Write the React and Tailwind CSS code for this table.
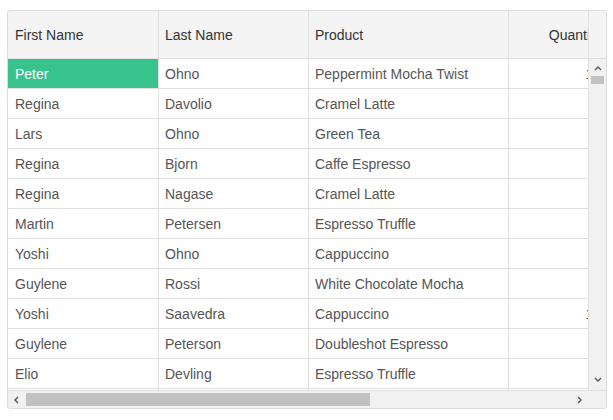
import React from 'react'

const rows = [
  ['Peter', 'Ohno', 'Peppermint Mocha Twist', '10'],
  ['Regina', 'Davolio', 'Cramel Latte', '5'],
  ['Lars', 'Ohno', 'Green Tea', '2'],
  ['Regina', 'Bjorn', 'Caffe Espresso', '4'],
  ['Regina', 'Nagase', 'Cramel Latte', '6'],
  ['Martin', 'Petersen', 'Espresso Truffle', '3'],
  ['Yoshi', 'Ohno', 'Cappuccino', '8'],
  ['Guylene', 'Rossi', 'White Chocolate Mocha', '7'],
  ['Yoshi', 'Saavedra', 'Cappuccino', '10'],
  ['Guylene', 'Peterson', 'Doubleshot Espresso', '9'],
  ['Elio', 'Devling', 'Espresso Truffle', '2'],
  ['Lars', 'Bjorn', 'Green Tea', '6'],
]

const Chevron = ({ dir }) => {
  const pts = {
    up: '1,5 4,2 7,5',
    down: '1,2 4,5 7,2',
    left: '5,1 2,4 5,7',
    right: '2,1 5,4 2,7',
  }[dir]
  return (
    <svg width="8" height="8" viewBox="0 0 8 8" className="block">
      <polyline points={pts} fill="none" stroke="#555" strokeWidth="1.4" />
    </svg>
  )
}

const App = () => {
  return (
    <div className="w-[613px] h-[420px] bg-white pl-[7px] pt-[10px] font-['Liberation_Sans',Arial,sans-serif] text-[14px]">
      <div className="w-[600px] h-[399px] border border-[#dddddd] rounded-[3px] flex flex-col overflow-hidden">
        {/* header */}
        <div className="flex h-[48px] border-b border-[#e0e0e0] bg-[#f4f4f4] text-[#333333]">
          <div className="w-[580px] flex overflow-hidden">
            <div className="w-[151px] shrink-0 border-r border-[#e0e0e0] flex items-center pl-[7px] pt-px">First Name</div>
            <div className="w-[150px] shrink-0 border-r border-[#e0e0e0] flex items-center pl-[6px] pt-px">Last Name</div>
            <div className="w-[200px] shrink-0 border-r border-[#e0e0e0] flex items-center pl-[6px] pt-px">Product</div>
            <div className="w-[101px] shrink-0 border-r border-[#e0e0e0] flex items-center justify-end pr-[8px] pt-px">Quantity</div>
          </div>
          <div className="flex-1 border-l border-[#e0e0e0]" />
        </div>

        {/* body */}
        <div className="flex h-[331px]">
          <div className="w-[580px] overflow-hidden text-[#555555]">
            {rows.map((r, i) => (
              <div key={i} className="flex h-[30px] border-b border-[#e0e0e0] shrink-0">
                <div
                  className={
                    i === 0
                      ? 'w-[151px] shrink-0 border-r border-[#e0e0e0] flex items-center pl-[7px] pt-px bg-[#37c38b] text-white'
                      : 'w-[151px] shrink-0 border-r border-[#e0e0e0] flex items-center pl-[7px] pt-px'
                  }
                >
                  {r[0]}
                </div>
                <div className="w-[150px] shrink-0 border-r border-[#e0e0e0] flex items-center pl-[6px] pt-px">{r[1]}</div>
                <div className="w-[200px] shrink-0 border-r border-[#e0e0e0] flex items-center pl-[6px] pt-px">{r[2]}</div>
                <div className="w-[101px] shrink-0 border-r border-[#e0e0e0] flex items-center justify-end pr-[8px] pt-px">{r[3]}</div>
              </div>
            ))}
          </div>
          <div className="flex-1 border-l border-[#e0e0e0] bg-[#f1f1f1] flex flex-col items-center">
            <div className="mt-[4px] h-[12px] flex items-center">
              <Chevron dir="up" />
            </div>
            <div className="mt-[1px] w-[13px] h-[8px] bg-[#c1c1c1]" />
            <div className="flex-1" />
            <div className="mb-[4px] h-[12px] flex items-center">
              <Chevron dir="down" />
            </div>
          </div>
        </div>

        {/* horizontal scrollbar */}
        <div className="flex items-center h-[18px] border-t border-[#e0e0e0] bg-[#f1f1f1]">
          <div className="w-[18px] flex justify-center">
            <Chevron dir="left" />
          </div>
          <div className="w-[344px] h-[13px] bg-[#c1c1c1]" />
          <div className="flex-1" />
          <div className="w-[18px] mr-[17px] flex justify-center">
            <Chevron dir="right" />
          </div>
        </div>
      </div>
    </div>
  )
}

export default App
